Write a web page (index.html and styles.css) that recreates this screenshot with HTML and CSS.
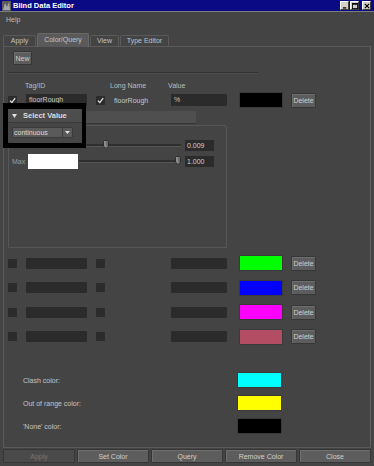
FILE: index.html
```html
<!DOCTYPE html>
<html lang="en">
<head>
    <meta charset="UTF-8">
    <title>Blind Data Editor</title>
    <link rel="stylesheet" href="styles.css">
</head>
<body>
<div class="window">
    <div class="titlebar">
        <svg class="app-icon" viewBox="0 0 9 10">
            <rect x="0" y="0" width="9" height="10" fill="#5c5c5c"/>
            <path d="M1 9 L3 2 L5 6 L7 1 L8 9 Z" fill="#a8a8a8"/>
        </svg>
        <span class="title">Blind Data Editor</span>
        <div class="win-buttons">
            <span class="win-btn"><svg viewBox="0 0 7 7"><rect x="1" y="5" width="4" height="1.5" fill="#000"/></svg></span>
            <span class="win-btn"><svg viewBox="0 0 7 7"><rect x="0.5" y="0.5" width="6" height="6" fill="none" stroke="#000"/><rect x="0.5" y="0.5" width="6" height="1.5" fill="#000"/></svg></span>
            <span class="win-btn close"><svg viewBox="0 0 7 7"><path d="M1 1 L6 6 M6 1 L1 6" stroke="#000" stroke-width="1.3"/></svg></span>
        </div>
    </div>

    <div class="menubar"><span>Help</span></div>

    <div class="tabs">
        <div class="tab tab-apply">Apply</div>
        <div class="tab tab-color active">Color/Query</div>
        <div class="tab tab-view">View</div>
        <div class="tab tab-type">Type Editor</div>
    </div>

    <div class="panel">
        <button class="btn new-btn">New</button>
        <div class="separator"></div>

        <div class="head-row">
            <span class="head-tag">Tag/ID</span>
            <span class="head-long">Long Name</span>
            <span class="head-value">Value</span>
        </div>

        <div class="data-row">
            <span class="check"><svg viewBox="0 0 9 9"><path d="M2 4.6 L3.8 6.6 L7.2 2.2" stroke="#e6e6e6" stroke-width="1.3" fill="none"/></svg></span>
            <span class="field tag-field">floorRough</span>
            <span class="check check2"><svg viewBox="0 0 9 9"><path d="M2 4.6 L3.8 6.6 L7.2 2.2" stroke="#e6e6e6" stroke-width="1.3" fill="none"/></svg></span>
            <span class="long-name">floorRough</span>
            <span class="field value-field">%</span>
            <span class="swatch swatch-black"></span>
            <button class="btn delete-btn">Delete</button>
        </div>

        <div class="frame-bar"></div>
        <div class="frame">
            <div class="slider-row">
                <span class="slider-label">Min</span>
                <span class="color-field min-field"></span>
                <div class="track">
                    <svg class="handle handle-min" viewBox="0 0 6 9"><path d="M0.5 1.5 Q0.5 0.5 1.5 0.5 H4.5 Q5.5 0.5 5.5 1.5 V6 L3 8.5 L0.5 6 Z" fill="#8e8e8e" stroke="#2c2c2c"/><rect x="3" y="1" width="2" height="5" fill="#6c6c6c"/></svg>
                </div>
                <span class="num-field">0.009</span>
            </div>
            <div class="slider-row">
                <span class="slider-label">Max</span>
                <span class="color-field"></span>
                <div class="track">
                    <svg class="handle handle-max" viewBox="0 0 6 9"><path d="M0.5 1.5 Q0.5 0.5 1.5 0.5 H4.5 Q5.5 0.5 5.5 1.5 V6 L3 8.5 L0.5 6 Z" fill="#8e8e8e" stroke="#2c2c2c"/><rect x="3" y="1" width="2" height="5" fill="#6c6c6c"/></svg>
                </div>
                <span class="num-field">1.000</span>
            </div>
        </div>

        <div class="color-rows">
            <div class="data-row">
                <span class="check"></span>
                <span class="field tag-field"></span>
                <span class="check check2"></span>
                <span class="long-name"></span>
                <span class="field value-field"></span>
                <span class="swatch swatch-green"></span>
                <button class="btn delete-btn">Delete</button>
            </div>
            <div class="data-row">
                <span class="check"></span>
                <span class="field tag-field"></span>
                <span class="check check2"></span>
                <span class="long-name"></span>
                <span class="field value-field"></span>
                <span class="swatch swatch-blue"></span>
                <button class="btn delete-btn">Delete</button>
            </div>
            <div class="data-row">
                <span class="check"></span>
                <span class="field tag-field"></span>
                <span class="check check2"></span>
                <span class="long-name"></span>
                <span class="field value-field"></span>
                <span class="swatch swatch-magenta"></span>
                <button class="btn delete-btn">Delete</button>
            </div>
            <div class="data-row">
                <span class="check"></span>
                <span class="field tag-field"></span>
                <span class="check check2"></span>
                <span class="long-name"></span>
                <span class="field value-field"></span>
                <span class="swatch swatch-rose"></span>
                <button class="btn delete-btn">Delete</button>
            </div>
        </div>

        <div class="special-colors">
            <div class="special-row">
                <span class="special-label">Clash color:</span>
                <span class="swatch special-swatch swatch-cyan"></span>
            </div>
            <div class="special-row">
                <span class="special-label">Out of range color:</span>
                <span class="swatch special-swatch swatch-yellow"></span>
            </div>
            <div class="special-row">
                <span class="special-label">'None' color:</span>
                <span class="swatch special-swatch swatch-black"></span>
            </div>
        </div>

        <!-- zoomed callout of the collapsed frame header -->
        <div class="select-popup">
            <div class="popup-head">
                <svg class="popup-arrow" viewBox="0 0 5 4"><path d="M0 0 H5 L2.5 4 Z" fill="#e0e0e0"/></svg>
                <span class="popup-title">Select Value</span>
            </div>
            <div class="dropdown">
                <span class="dropdown-text">continuous</span>
                <span class="dropdown-arrow"><svg viewBox="0 0 5 3"><path d="M0 0 H5 L2.5 3 Z" fill="#e0e0e0"/></svg></span>
            </div>
        </div>
    </div>

    <div class="bottom-buttons">
        <button class="btn bottom-btn disabled">Apply</button>
        <button class="btn bottom-btn">Set Color</button>
        <button class="btn bottom-btn">Query</button>
        <button class="btn bottom-btn">Remove Color</button>
        <button class="btn bottom-btn">Close</button>
    </div>
</div>
</body>
</html>
```

FILE: styles.css
```css
* {
    box-sizing: border-box;
}

body {
    margin: 0;
    background: #444;
    font-family: "Liberation Sans", Arial, sans-serif;
    font-size: 7px;
    color: #c6c6c6;
}

.window {
    width: 374px;
    height: 466px;
    background: #444;
    overflow: hidden;
}

/* title bar */
.titlebar {
    height: 12px;
    background: #0a0a84;
    border-bottom: 1px solid #7c7c7c;
    display: flex;
    align-items: center;
    padding: 0 3px 0 2px;
}

.app-icon {
    width: 9px;
    height: 10px;
    display: block;
}

.title {
    margin-left: 2px;
    color: #fff;
    font-weight: bold;
    font-size: 7.5px;
}

.win-buttons {
    margin-left: auto;
    display: flex;
    gap: 1px;
}

.win-btn {
    width: 9px;
    height: 9px;
    background: #d4d0c8;
    border: 1px solid;
    border-color: #fff #404040 #404040 #fff;
    display: flex;
    align-items: center;
    justify-content: center;
}

.win-btn svg {
    width: 6px;
    height: 6px;
    display: block;
}

.win-btn.close {
    margin-left: 2px;
}

.menubar {
    height: 21px;
    padding: 4px 0 0 6px;
    line-height: 8px;
    color: #bdbdbd;
}

/* tabs */
.tabs {
    height: 13px;
    display: flex;
    align-items: flex-end;
    padding-left: 3px;
}

.tab {
    height: 11px;
    margin-right: 1px;
    background: #444;
    border: 1px solid #5a5a5a;
    border-bottom: none;
    border-radius: 2px 2px 0 0;
    text-align: center;
    line-height: 10px;
    color: #c2c2c2;
}

.tab.active {
    height: 14px;
    margin-bottom: -1px;
    background: #5a5a5a;
    border-color: #686868;
    line-height: 12px;
    position: relative;
    z-index: 1;
}

.tab-apply { width: 33px; }
.tab-color { width: 52px; }
.tab-view { width: 29px; }
.tab-type { width: 49px; }

/* main panel */
.panel {
    position: relative;
    margin: 0 3px;
    height: 402px;
    border: 1px solid #5a5a5a;
    border-right-color: #626262;
}

.btn {
    display: block;
    padding: 0;
    background: #5d5d5d;
    border: 1px solid #363636;
    box-shadow: inset 1px 1px 0 #6e6e6e;
    border-radius: 1px;
    color: #cfcfcf;
    font-family: inherit;
    font-size: 7px;
    text-align: center;
}

.new-btn {
    margin: 4px 0 0 9px;
    width: 19px;
    height: 14px;
}

.separator {
    margin: 7px 0 0 4px;
    width: 250px;
    height: 1px;
    background: #333;
    box-shadow: 0 1px 0 #4d4d4d;
}

.head-row {
    margin-top: 7px;
    height: 10px;
    display: flex;
    align-items: center;
    padding-left: 21px;
    color: #bdbdbd;
}

.head-tag { width: 85px; }
.head-long { width: 58px; }

.data-row {
    margin-top: 2px;
    height: 16px;
    display: flex;
    align-items: center;
    padding-left: 4px;
}

.check {
    width: 9px;
    height: 9px;
    background: #2b2b2b;
    border-radius: 1px;
}

.check svg {
    width: 9px;
    height: 9px;
    display: block;
}

.field {
    height: 12px;
    background: #2b2b2b;
    border-radius: 1px;
    line-height: 12px;
    padding-left: 3px;
    color: #c8c8c8;
}

.tag-field {
    margin-left: 9px;
    width: 61px;
}

.check2 {
    margin-left: 9px;
}

.long-name {
    margin-left: 9px;
    width: 57px;
    color: #c8c8c8;
}

.value-field {
    width: 56px;
}

.swatch {
    width: 44px;
    height: 16px;
    border: 1px solid #3a3a3a;
}

.data-row .swatch {
    margin-left: 12px;
}

.swatch-black { background: #000; }
.swatch-green { background: #00ff00; }
.swatch-blue { background: #0000ff; }
.swatch-magenta { background: #ff00ff; }
.swatch-rose { background: #b34d64; }
.swatch-cyan { background: #00ffff; }
.swatch-yellow { background: #ffff00; }

.delete-btn {
    margin-left: 8px;
    width: 25px;
    height: 15px;
}

/* collapsible frame */
.frame-bar {
    margin: 3px 0 0 4px;
    width: 188px;
    height: 13px;
    background: #4f4f4f;
    border-bottom: 1px solid #363636;
    border-radius: 0 2px 2px 0;
}

.frame {
    margin: 1px 0 0 4px;
    width: 219px;
    height: 123px;
    padding-top: 11px;
    border: 1px solid #575757;
    border-radius: 0 3px 0 0;
}

.slider-row {
    height: 16px;
    display: flex;
    align-items: center;
    padding-left: 3px;
}

.slider-label {
    width: 16px;
    color: #9c9c9c;
}

.color-field {
    width: 50px;
    height: 15px;
    background: #fff;
}

.min-field {
    visibility: hidden;
}

.track {
    position: relative;
    margin-left: 1px;
    width: 102px;
    height: 3px;
    background: #2e2e2e;
    border-bottom: 1px solid #555;
}

.handle {
    position: absolute;
    top: -4px;
    width: 6px;
    height: 9px;
}

.handle-min { left: 24px; }
.handle-max { left: 96px; }

.num-field {
    margin-left: 4px;
    width: 29px;
    height: 11px;
    line-height: 11px;
    padding-left: 2px;
    background: #2b2b2b;
    color: #d0d0d0;
}

.color-rows {
    margin-top: 7px;
    display: flex;
    flex-direction: column;
    gap: 8.5px;
}

.color-rows .data-row {
    margin-top: 0;
}

.color-rows .field {
    height: 11px;
}

/* clash / range colours */
.special-colors {
    margin-top: 27.5px;
    display: flex;
    flex-direction: column;
    gap: 7px;
}

.special-row {
    display: flex;
    align-items: center;
    padding-left: 19px;
    height: 16px;
}

.special-label {
    width: 214px;
    color: #c4c4c4;
}

.special-swatch {
    width: 45px;
}

/* callout */
.select-popup {
    position: absolute;
    left: -1px;
    top: 56px;
    width: 83px;
    height: 45px;
    border: 5px solid #000;
    border-top-width: 6px;
    border-right-width: 4px;
    background: #464646;
}

.popup-head {
    height: 14px;
    display: flex;
    align-items: center;
    padding-left: 4px;
    background: #4d4d4d;
    border-bottom: 1px solid #3a3a3a;
}

.popup-arrow {
    width: 5px;
    height: 4px;
    margin-right: 6px;
    display: block;
}

.popup-title {
    font-weight: bold;
    font-size: 7.5px;
    color: #dcdcdc;
}

.dropdown {
    margin: 4px 0 0 4px;
    width: 61px;
    height: 11px;
    display: flex;
    background: #5a5a5a;
    border: 1px solid #3a3a3a;
    border-radius: 1px;
}

.dropdown-text {
    flex: 1;
    padding-left: 1px;
    line-height: 9px;
    color: #dadada;
}

.dropdown-arrow {
    width: 10px;
    border-left: 1px solid #3c3c3c;
    display: flex;
    align-items: center;
    justify-content: center;
}

.dropdown-arrow svg {
    width: 5px;
    height: 3px;
    display: block;
}

/* bottom buttons */
.bottom-buttons {
    margin: 1px 3px 0;
    display: flex;
    gap: 2px;
    height: 14px;
}

.bottom-btn {
    flex: 1;
    height: 14px;
}

.bottom-btn.disabled {
    background: #4a4a4a;
    box-shadow: none;
    color: #767676;
}
```
